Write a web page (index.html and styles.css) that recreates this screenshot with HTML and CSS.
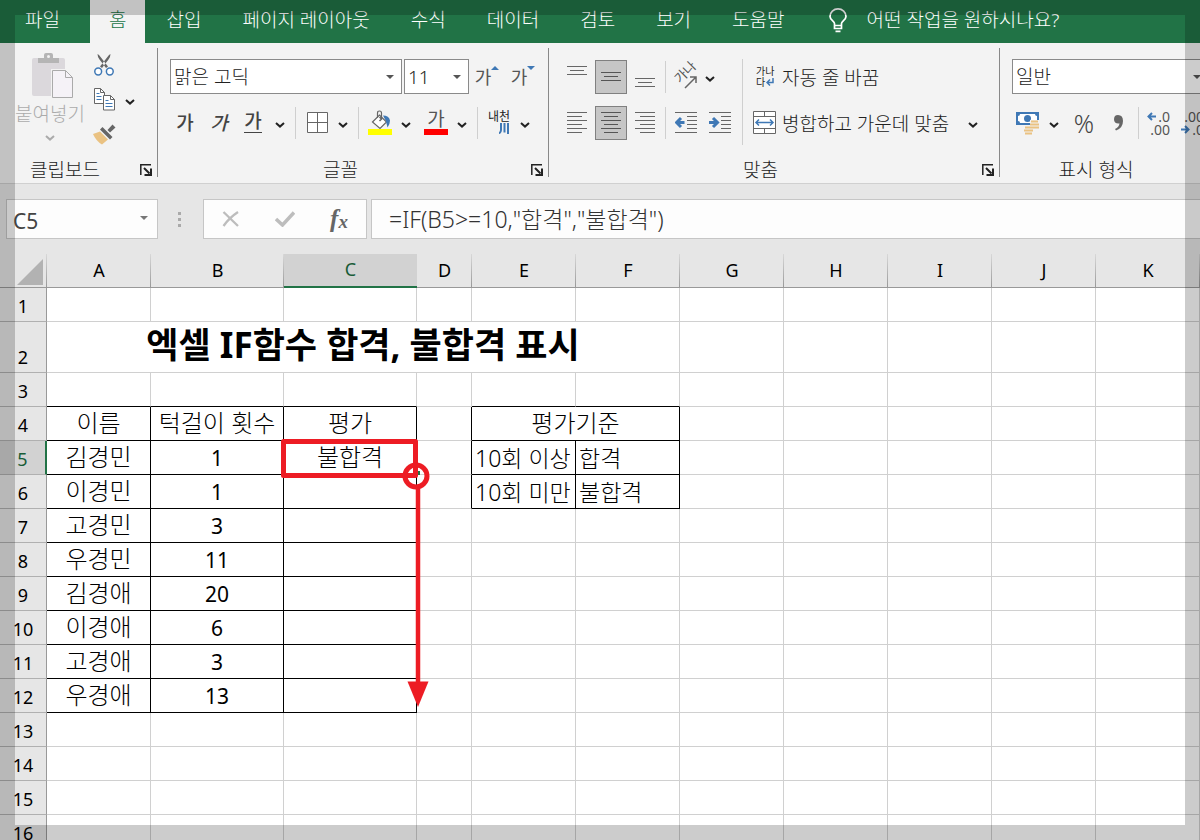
FILE: index.html
```html
<!DOCTYPE html>
<html lang="ko">
<head>
<meta charset="utf-8">
<meta name="viewport" content="width=device-width, initial-scale=1">
<title>엑셀 IF함수</title>
<link rel="stylesheet" href="styles.css">
</head>
<body>
<svg class="defs" aria-hidden="true">
  <symbol id="chev" viewBox="0 0 10 6"><path d="M1 1l4 3.600 4-3.600" fill="none" stroke="currentColor" stroke-width="2"/></symbol>
  <symbol id="tri" viewBox="0 0 8 4"><path d="M0 0h8l-4 4z" fill="currentColor"/></symbol>
  <symbol id="launch" viewBox="0 0 12 12"><path d="M.8 11V.8H11" fill="none" stroke="currentColor" stroke-width="1.500"/><path d="M4 4l5.500 5.500M11 4.500V11H4.500" fill="none" stroke="currentColor" stroke-width="2"/></symbol>
</svg>
<div class="app">
  <nav class="tabs">
    <button class="tab tab-file">파일</button>
    <button class="tab tab-on">홈</button>
    <button class="tab">삽입</button>
    <button class="tab">페이지 레이아웃</button>
    <button class="tab">수식</button>
    <button class="tab">데이터</button>
    <button class="tab">검토</button>
    <button class="tab">보기</button>
    <button class="tab">도움말</button>
    <button class="tab tell">
      <svg width="18" height="25" viewBox="0 0 18 25" fill="none" stroke="#fff" stroke-width="1.700"><path d="M5.500 17.500v-2C5.500 13.500 1 12 1 8.500a8 7.600 0 0 1 16 0c0 3.500-4.500 5-4.500 7v2zM5.500 17.500v3h7v-3M6.500 23.300h5"/></svg>
      어떤 작업을 원하시나요?
    </button>
  </nav>

  <section class="ribbon">
    <div class="group g-clip">
      <div class="clip">
        <button class="paste">
          <svg width="42" height="46" viewBox="0 0 42 46"><rect x="0" y="5" width="33" height="38" rx="2" fill="#dbd8dc"/><path d="M6 10V5h6V2q0-2 2-2h5q2 0 2 2v3h6v5z" fill="#b5b5b5"/><circle cx="16.500" cy="3.500" r="1.500" fill="#f3f3f3"/><path d="M19 16h16l7 7v23H19z" fill="#f3f3f3"/><path d="M20.500 17.500h13l7 7v20h-20z" fill="#f5f2f7" stroke="#aaa"/><path d="M33.500 17.500v7h7" fill="none" stroke="#aaa"/></svg>
          <span>붙여넣기</span>
          <svg width="10" height="6"><use href="#chev"/></svg>
        </button>
        <div class="clip-col">
          <button class="ico" aria-label="잘라내기"><svg width="20" height="22" viewBox="0 0 20 22"><path d="M3.500 0q0 3 2 5.500l6.500 8.500 2-1.500L5 1zM16.500 0q0 3-2 5.500L8 14l-2-1.500L15 1z" fill="#666"/><g fill="#fff" stroke="#3f78b5" stroke-width="1.500"><circle cx="4.200" cy="17.500" r="3.400"/><circle cx="15.800" cy="17.500" r="3.400"/></g></svg></button>
          <div class="line"><button class="ico" aria-label="복사"><svg width="21" height="23" viewBox="0 0 21 23" fill="#fff" stroke="#666"><path d="M.5.500h6l4 4v11H.5z"/><path d="M6.500.500v4h4" fill="none"/><path d="M2.500 5.500h3M2.500 8.500h5M2.500 11.500h5" stroke="#3f78b5"/><path d="M9.500 7.500h7l4 4v10.500h-11z"/><path d="M16.500 7.500v4h4" fill="none"/><path d="M11.500 12.500h3M11.500 15.500h7M11.500 18.500h7" stroke="#3f78b5"/></svg></button><button class="chev" aria-label="복사 옵션"><svg width="10" height="6"><use href="#chev"/></svg></button></div>
          <button class="ico" aria-label="서식 복사"><svg width="24" height="21" viewBox="0 0 24 21"><path d="M1 10l7-2.500 8 8L10 20.500Q4 17 1 10z" fill="#eac282"/><path d="M8 5.500l2.500-2.500 10 10-2.500 2.500zM15.500 6l5-5.500 3 3-5.500 5z" fill="#666"/></svg></button>
        </div>
      </div>
      <footer class="glabel"><span>클립보드</span><button class="launch" aria-label="클립보드 설정"><svg width="12" height="12"><use href="#launch"/></svg></button></footer>
    </div>

    <div class="group g-font">
      <div class="line row">
        <label class="combo combo-font"><select aria-label="글꼴"><option>맑은 고딕</option></select><svg width="8" height="4"><use href="#tri"/></svg></label>
        <label class="combo combo-size"><select aria-label="글꼴 크기"><option>11</option></select><svg width="8" height="4"><use href="#tri"/></svg></label>
        <button class="btn grow" aria-label="글꼴 크기 크게">가<svg width="8" height="4" viewBox="0 0 8 4"><path d="M0 4h8L4 0z" fill="#3f78b5"/></svg></button>
        <button class="btn grow" aria-label="글꼴 크기 작게">가<svg width="8" height="4" class="blue"><use href="#tri"/></svg></button>
      </div>
      <div class="line row">
        <button class="btn ga">가</button><button class="btn ga ga-i">가</button><button class="btn ga ga-u"><span>가</span></button>
        <button class="chev" aria-label="밑줄 옵션"><svg width="10" height="6"><use href="#chev"/></svg></button><i class="sep"></i>
        <button class="ico" aria-label="테두리"><svg width="21" height="21" viewBox="0 0 21 21" fill="#fff" stroke="#666"><path d="M.5.500h20v20H.5zM10.500.500v20M.5 10.500h20"/></svg></button>
        <button class="chev" aria-label="테두리 옵션"><svg width="10" height="6"><use href="#chev"/></svg></button><i class="sep"></i>
        <button class="ico" aria-label="채우기 색"><svg width="24" height="25" viewBox="0 0 24 25"><path d="M4.500 12l7-7 7 7-6.500 6.500z" fill="#fff" stroke="#666" stroke-width="1.200"/><path d="M9.500 8V3q0-2 2-2t2 2v6" fill="none" stroke="#666" stroke-width="1.200"/><path d="M11.500 7l2 2-2 2" fill="none" stroke="#666" stroke-width="1.500"/><path d="M15 5.500q6 0 7 5 0 4-2.500 7-1-7-4.500-12z" fill="#3f78b5"/><path d="M0 19h24v6H0z" fill="#ff0"/></svg></button>
        <button class="chev after" aria-label="채우기 옵션"><svg width="10" height="6"><use href="#chev"/></svg></button>
        <button class="ico fcolor" aria-label="글꼴 색"><span>가</span></button>
        <button class="chev" aria-label="글꼴 색 옵션"><svg width="10" height="6"><use href="#chev"/></svg></button><i class="sep"></i>
        <button class="ico ruby" aria-label="윗주"><span>내천</span><svg width="10" height="11" viewBox="0 0 10 11" fill="none" stroke="#3f78b5" stroke-width="2"><path d="M2 0v7q0 2-2 3.500M5.500 0v9.500M9 0v11"/></svg></button>
        <button class="chev" aria-label="윗주 옵션"><svg width="10" height="6"><use href="#chev"/></svg></button>
      </div>
      <footer class="glabel"><span>글꼴</span><button class="launch" aria-label="글꼴 설정"><svg width="12" height="12"><use href="#launch"/></svg></button></footer>
    </div>

    <div class="group g-align">
      <div class="cols">
        <div class="stack">
          <div class="line row tight">
            <button class="ico" aria-label="위쪽 맞춤"><svg width="20" height="22" viewBox="0 0 20 22" stroke="#666"><path d="M0 .5h20M3 4.500h14M0 8.500h20"/></svg></button>
            <button class="ico on" aria-label="가운데 맞춤"><svg width="20" height="22" viewBox="0 0 20 22" stroke="#555"><path d="M0 6.500h20M3 10.500h14M0 14.500h20"/></svg></button>
            <button class="ico" aria-label="아래쪽 맞춤"><svg width="20" height="22" viewBox="0 0 20 22" stroke="#666"><path d="M0 12.500h20M3 16.500h14M0 20.500h20"/></svg></button>
            <i class="sep"></i>
            <button class="ico orient" aria-label="방향"><svg width="24" height="24" viewBox="0 0 24 24"><text x="6" y="19" transform="rotate(-45 6 19)" class="tiny">가나</text><path d="M11 23L21.500 12.500M16 12h6v6" fill="none" stroke="#666" stroke-width="1.500"/></svg></button>
            <button class="chev slim" aria-label="방향 옵션"><svg width="10" height="6"><use href="#chev"/></svg></button>
          </div>
          <div class="line row tight">
            <button class="ico" aria-label="왼쪽 맞춤"><svg width="20" height="22" viewBox="0 0 20 22" stroke="#666"><path d="M0 .5h20M0 4.500h15M0 8.500h20M0 12.500h15M0 16.500h20M0 20.500h15"/></svg></button>
            <button class="ico on" aria-label="가로 가운데"><svg width="20" height="22" viewBox="0 0 20 22" stroke="#555"><path d="M0 .5h20M3 4.500h14M0 8.500h20M3 12.500h14M0 16.500h20M3 20.500h14"/></svg></button>
            <button class="ico" aria-label="오른쪽 맞춤"><svg width="20" height="22" viewBox="0 0 20 22" stroke="#666"><path d="M0 .5h20M5 4.500h15M0 8.500h20M5 12.500h15M0 16.500h20M5 20.500h15"/></svg></button>
            <i class="sep"></i>
            <button class="ico" aria-label="내어쓰기"><svg width="22" height="22" viewBox="0 0 22 22" stroke="#666" fill="none"><path d="M0 .5h22M12 4.500h10M12 8.500h10M12 12.500h10M12 16.500h10M0 20.500h22"/><path d="M9.500 10.500H2M6 6l-4.500 4.500L6 15" stroke="#3f78b5" stroke-width="3"/></svg></button>
            <button class="ico" aria-label="들여쓰기"><svg width="22" height="22" viewBox="0 0 22 22" stroke="#666" fill="none"><path d="M0 .5h22M12 4.500h10M12 8.500h10M12 12.500h10M12 16.500h10M0 20.500h22"/><path d="M0 10.500h7.500M4 6l4.500 4.500L4 15" stroke="#3f78b5" stroke-width="3"/></svg></button>
          </div>
        </div>
        <i class="bar"></i>
        <div class="stack">
          <div class="line row"><button class="wide"><span class="wrap-ico"><span>가나</span><span>다<svg width="8" height="8" viewBox="0 0 8 8"><path d="M7 0v4.500H1M4 1.500l-3 3 3 3" fill="none" stroke="#3f78b5" stroke-width="1.500"/></svg></span></span>자동 줄 바꿈</button></div>
          <div class="line row"><button class="wide"><svg width="24" height="23" viewBox="0 0 24 23"><path d="M.5.500h22v22H.5z" fill="#fff" stroke="#666"/><path d="M.5 5.500h22M.5 17.500h22M11.500.500v5M11.500 17.500v5" stroke="#666"/><path d="M3 11.500h17M6 8.500l-3 3 3 3M17 8.500l3 3-3 3" fill="none" stroke="#3f78b5" stroke-width="1.500"/></svg>병합하고 가운데 맞춤</button><button class="chev merge" aria-label="병합 옵션"><svg width="10" height="6"><use href="#chev"/></svg></button></div>
        </div>
      </div>
      <footer class="glabel"><span>맞춤</span><button class="launch" aria-label="맞춤 설정"><svg width="12" height="12"><use href="#launch"/></svg></button></footer>
    </div>

    <div class="group g-num">
      <div class="line row"><label class="combo combo-num"><select aria-label="표시 형식"><option>일반</option></select><svg width="8" height="4"><use href="#tri"/></svg></label></div>
      <div class="line row">
        <button class="ico" aria-label="회계 형식"><svg width="24" height="24" viewBox="0 0 24 24"><path d="M0 1h23v13H0z" fill="#3f78b5"/><path d="M4 3h15q0 2 2 2v5q-2 0-2 2H4q0-2-2-2V5q2 0 2-2z" fill="#fff"/><circle cx="11.500" cy="7.500" r="3.500" fill="#3f78b5"/><path d="M14 9h10v9h-7v5H8v-8h6z" fill="#f3f3f3"/><g stroke="#eac282" stroke-width="2"><path d="M15 10.500h7M14 13.500h9M14 16.500h9M9 16.500h7M8 19.500h9M9 22.500h7"/></g></svg></button>
        <button class="chev" aria-label="회계 옵션"><svg width="10" height="6"><use href="#chev"/></svg></button>
        <button class="btn pct">%</button>
        <button class="btn" aria-label="쉼표 스타일"><svg width="9" height="16" viewBox="0 0 9 16"><path d="M4 0q5 0 5 6 0 7-7 9.500L1 14q4-2 4.500-5.500Q0 9 0 4.300 0 0 4 0z" fill="#666"/></svg></button>
        <i class="sep"></i>
        <button class="dec" aria-label="자릿수 늘림"><span><svg width="9" height="9" viewBox="0 0 9 9"><path d="M9 4.500H2M5 1L1.500 4.500 5 8" fill="none" stroke="#3f78b5" stroke-width="2"/></svg>.0</span><span>.00</span></button>
        <button class="dec" aria-label="자릿수 줄임"><span>.00</span><span><svg width="9" height="9" viewBox="0 0 9 9"><path d="M0 4.500h7M4 1l3.500 3.500L4 8" fill="none" stroke="#3f78b5" stroke-width="2"/></svg>.0</span></button>
      </div>
      <footer class="glabel"><span>표시 형식</span></footer>
    </div>
  </section>

  <section class="fbar">
    <label class="namebox"><input value="C5" aria-label="이름 상자"><svg width="8" height="4"><use href="#tri"/></svg></label>
    <svg class="dots" width="3" height="15" viewBox="0 0 3 15" fill="#aaa"><path d="M0 0h3v3H0zM0 6h3v3H0zM0 12h3v3H0z"/></svg>
    <div class="fbtns">
      <button aria-label="취소"><svg width="18" height="16" viewBox="0 0 18 16"><path d="M1.500 1L16 15M16 1Q7 7 1.500 15" fill="none" stroke="#bdbdbd" stroke-width="2.300"/></svg></button>
      <button aria-label="입력"><svg width="20" height="16" viewBox="0 0 20 16"><path d="M1 8l6.500 6L19 1.500" fill="none" stroke="#bdbdbd" stroke-width="3.500"/></svg></button>
      <button class="fx" aria-label="함수 삽입"><i>f</i><i class="x">x</i></button>
    </div>
    <input class="formula" aria-label="수식 입력줄" value='=IF(B5&gt;=10,"합격","불합격")'>
  </section>

  <main class="sheet">
    <table class="grid">
      <colgroup><col class="c-h"><col class="c-n"><col class="c-w"><col class="c-w"><col class="c-s"><col class="c-n"><col class="c-n"><col class="c-n"><col class="c-n"><col class="c-n"><col class="c-n"><col class="c-n"></colgroup>
      <thead><tr><th class="corner"><svg width="26" height="26" viewBox="0 0 26 26"><path d="M26 0v26H0z" fill="#b2b2b2"/></svg></th><th>A</th><th>B</th><th class="sel">C</th><th>D</th><th>E</th><th>F</th><th>G</th><th>H</th><th>I</th><th>J</th><th>K</th></tr></thead>
      <tbody>
        <tr><th>1</th><td></td><td></td><td></td><td></td><td></td><td></td><td></td><td></td><td></td><td></td><td></td></tr>
        <tr class="tall"><th>2</th><td colspan="6" class="title">엑셀 IF함수 합격, 불합격 표시</td><td></td><td></td><td></td><td></td><td></td></tr>
        <tr><th>3</th><td class="b"></td><td class="b"></td><td class="b"></td><td></td><td class="b"></td><td class="b"></td><td></td><td></td><td></td><td></td><td></td></tr>
        <tr><th>4</th><td class="k">이름</td><td class="k">턱걸이 횟수</td><td class="k">평가</td><td class="r"></td><td colspan="2" class="k">평가기준</td><td></td><td></td><td></td><td></td><td></td></tr>
        <tr><th class="sel">5</th><td class="k">김경민</td><td class="k num">1</td><td class="k">불합격</td><td class="r"></td><td class="k lt">10회 이상</td><td class="k lt">합격</td><td></td><td></td><td></td><td></td><td></td></tr>
        <tr><th>6</th><td class="k">이경민</td><td class="k num">1</td><td class="k"></td><td class="r"></td><td class="k lt">10회 미만</td><td class="k lt">불합격</td><td></td><td></td><td></td><td></td><td></td></tr>
        <tr><th>7</th><td class="k">고경민</td><td class="k num">3</td><td class="k"></td><td></td><td></td><td></td><td></td><td></td><td></td><td></td><td></td></tr>
        <tr><th>8</th><td class="k">우경민</td><td class="k num">11</td><td class="k"></td><td></td><td></td><td></td><td></td><td></td><td></td><td></td><td></td></tr>
        <tr><th>9</th><td class="k">김경애</td><td class="k num">20</td><td class="k"></td><td></td><td></td><td></td><td></td><td></td><td></td><td></td><td></td></tr>
        <tr><th>10</th><td class="k">이경애</td><td class="k num">6</td><td class="k"></td><td></td><td></td><td></td><td></td><td></td><td></td><td></td><td></td></tr>
        <tr><th>11</th><td class="k">고경애</td><td class="k num">3</td><td class="k"></td><td></td><td></td><td></td><td></td><td></td><td></td><td></td><td></td></tr>
        <tr><th>12</th><td class="k">우경애</td><td class="k num">13</td><td class="k"></td><td></td><td></td><td></td><td></td><td></td><td></td><td></td><td></td></tr>
        <tr><th>13</th><td></td><td></td><td></td><td></td><td></td><td></td><td></td><td></td><td></td><td></td><td></td></tr>
        <tr><th>14</th><td></td><td></td><td></td><td></td><td></td><td></td><td></td><td></td><td></td><td></td><td></td></tr>
        <tr><th>15</th><td></td><td></td><td></td><td></td><td></td><td></td><td></td><td></td><td></td><td></td><td></td></tr>
        <tr><th>16</th><td></td><td></td><td></td><td></td><td></td><td></td><td></td><td></td><td></td><td></td><td></td></tr>
      </tbody>
    </table>
    <svg class="marks" width="160" height="280" viewBox="0 0 160 280"><path d="M141 37h4v4h-4z" fill="#217346"/><g fill="none" stroke="#ed1c24" stroke-width="5"><rect x="8.500" y="7.500" width="132" height="34" stroke-linejoin="round"/><circle cx="141" cy="42" r="11"/><path d="M143 52v200" stroke-width="4.500"/></g><path d="M132.500 247.500h21L143 273z" fill="#ed1c24"/></svg>
  </main>
  <div class="frame"></div>
</div>
</body>
</html>
```
FILE: styles.css
```css
* { box-sizing: border-box; }
body { margin: 0; font-family: "Noto Sans", "Noto Sans CJK KR", sans-serif; font-weight: 300; color: #222; }
button, select, input { font: inherit; color: inherit; border: 0; background: none; padding: 0; margin: 0; }
svg { display: block; flex: none; }
.defs { position: absolute; width: 0; height: 0; }
.app { position: relative; height: 100vh; overflow: hidden; display: flex; flex-direction: column; background: #fff; }
.frame { position: absolute; inset: 0; border: 15px solid rgba(0, 0, 0, .2); pointer-events: none; }

.tabs { flex: none; display: flex; height: 43px; background: #217346; }
.tab { padding: 0 20px 3px 21px; font-size: 19px; line-height: 36px; color: #fff; white-space: nowrap; }
.tab-file { padding: 0 30px 3px 25px; }
.tab-on { padding: 0 19px 3px; background: #f3f3f3; color: #217346; }
.tell { display: flex; align-items: center; gap: 20px; padding-left: 24px; }

.ribbon { flex: none; display: flex; height: 141px; background: #f3f3f3; border-bottom: 1px solid #d0d0d0; overflow: hidden; font-size: 19px; }
.group { flex: none; position: relative; display: flex; flex-direction: column; padding-top: 16px; }
.group:not(:last-child)::after { content: ""; position: absolute; top: 5px; right: 0; height: 129px; width: 1px; background: #888; }
.line { display: flex; align-items: center; }
.row { height: 35px; margin-bottom: 11px; }
.glabel { display: flex; align-items: center; justify-content: center; height: 28px; margin-top: auto; position: relative; }
.launch { position: absolute; right: 6px; top: 9px; }
.btn, .ico, .chev { display: flex; align-items: center; justify-content: center; flex: none; height: 34px; }
.btn { width: 34px; }
.ico { width: 32px; }
.chev { width: 20px; padding-top: 4px; }
.slim { width: 12px; }
.after { margin-right: 4px; }
.sep { flex: none; width: 11px; height: 32px; background: linear-gradient(#cfcfcf, #cfcfcf) center / 1px 100% no-repeat; }
.on { background: #c6c6c6; border: 1px solid #808080; }

.g-clip { width: 158px; padding-top: 10px; }
.clip { display: flex; padding-left: 12px; }
.paste { width: 76px; height: 92px; display: flex; flex-direction: column; align-items: center; color: #ababab; white-space: nowrap; font-size: 19px; line-height: 30px; }
.paste svg:first-child { margin-left: 6px; }
.paste span { margin-bottom: 6px; }
.clip-col { display: flex; flex-direction: column; gap: 12px; }
.g-clip .glabel { padding-right: 28px; }
.clip-col .ico, .clip-col .chev { height: 23px; }

.g-font { width: 391px; }
.g-font .row { padding-left: 10px; }
.combo { position: relative; flex: none; height: 35px; background: #fff; border: 1px solid #8a8a8a; }
.combo select { appearance: none; width: 100%; height: 100%; padding-left: 3px; font-size: 19px; }
.combo svg { position: absolute; right: 7px; top: 15px; color: #555; pointer-events: none; }
.combo-font { width: 232px; margin: 0 2px; }
.combo-size { width: 65px; }
.combo-num { width: 190px; }
.combo-num svg { right: 0; }
.grow { width: 36px; font-size: 18px; font-weight: 400; color: #555; align-items: flex-start; line-height: 34px; }
.grow svg { margin-top: 6px; }
.blue { color: #3f78b5; }
.ga { font-weight: 500; font-size: 19px; color: #444; padding-bottom: 2px; }
.ga-i { font-style: italic; }
.ga-u span { border-bottom: 1px solid #444; line-height: 22px; }
.fcolor span { width: 24px; height: 25px; line-height: 18px; font-weight: 400; color: #555; border-bottom: 6px solid #f00; }
.ruby { flex-direction: column; font-size: 12px; line-height: 12px; font-weight: 400; }
.ruby svg { margin-left: 10px; }
.g-font .glabel { padding-right: 26px; }

.g-align { width: 451px; }
.cols { display: flex; padding-left: 12px; }
.tight { gap: 2px; }
.tight .sep { width: 5px; }
.bar { width: 1px; height: 86px; background: #cfcfcf; margin: 0 10px 0 6px; }
.wide { display: flex; align-items: center; gap: 5px; white-space: nowrap; }
.wrap-ico { display: flex; flex-direction: column; width: 24px; padding-left: 3px; font-size: 10px; line-height: 11px; font-weight: 400; }
.wrap-ico span { display: flex; align-items: center; gap: 1px; }
.merge { margin-left: 14px; }
.g-align .glabel { padding-right: 28px; }
.orient svg { overflow: visible; }
.tiny { font-size: 13px; font-weight: 400; fill: #555; }

.g-num { flex: 1 0 194px; padding-left: 12px; }
.g-num .glabel { padding-right: 30px; }
.pct { font-size: 25px; color: #444; margin-left: 3px; }
.g-num .sep { width: 7px; }
.dec { flex: none; width: 34px; font-size: 14px; font-weight: 400; color: #555; }
.dec span { display: flex; align-items: center; justify-content: flex-end; gap: 2px; padding-right: 6px; line-height: 13px; }

.fbar { flex: none; display: flex; align-items: stretch; height: 70px; padding: 15px 0 15px 6px; background: #e6e6e6; color: #444; }
.namebox { position: relative; width: 152px; border: 1px solid #c6c6c6; background: #fdfdfd; }
.namebox input { width: 100%; height: 100%; padding: 4px 0 0 6px; font-size: 21px; font-weight: 400; }
.namebox svg { position: absolute; right: 9px; top: 16px; color: #777; }
.dots { align-self: center; margin: 0 22px 0 20px; }
.fbtns { display: flex; width: 164px; border: 1px solid #c6c6c6; background: #fdfdfd; }
.fbtns button { flex: 1; display: flex; align-items: center; justify-content: center; }
.fx { font: italic 700 25px "Liberation Serif", serif; color: #666; }
.fx .x { font-size: 19px; padding-top: 5px; }
.formula { flex: 1; min-width: 0; margin-left: 4px; padding: 0 0 2px 17px; border: 1px solid #c6c6c6; border-right: 0; background: #fdfdfd; font-size: 23px; color: #333; }

.sheet { position: relative; flex: none; }
.grid { width: 100%; table-layout: fixed; border-collapse: separate; border-spacing: 0; }
.c-h { width: 47px; }
.c-n { width: 104px; }
.c-w { width: 133px; }
.c-s { width: 55px; }
.grid th { padding: 0; height: 34px; font-size: 18px; font-weight: 400; line-height: 24px; color: #000; background: #e6e6e6; border-bottom: 1px solid #999; }
.grid thead th { padding-bottom: 2px; background: linear-gradient(#d8d8d8, #999) right / 1px 100% no-repeat #e6e6e6; }
.grid thead .corner { padding: 3px 0 0 17px; }
.grid thead .sel { background: #d2d2d2; border-bottom: 2px solid #217346; color: #185c37; }
.grid tbody th { vertical-align: bottom; border-right: 1px solid #999; border-bottom-color: #b0b0b0; line-height: 26px; padding-bottom: 2px; }
.grid tbody .sel { background: #d2d2d2; border-right: 2px solid #217346; color: #185c37; }
.grid td { height: 34px; padding: 0 0 2px; border-right: 1px solid #d0d0d0; border-bottom: 1px solid #d0d0d0; font-size: 24px; line-height: 31px; text-align: center; color: #000; white-space: nowrap; }
.grid .tall td { height: 51px; }
.grid .b { border-bottom-color: #000; }
.grid .r { border-right-color: #000; }
.grid .k { border-color: #000; }
.grid .num { font-size: 21px; font-weight: 400; padding: 2px 0 0; }
.grid .lt { text-align: left; padding: 1px 0 0 3px; font-size: 23px; }
.grid .title { font-size: 35px; font-weight: 700; line-height: 46px; padding-bottom: 4px; }
.marks { position: absolute; left: 275px; top: 180px; pointer-events: none; }
```
